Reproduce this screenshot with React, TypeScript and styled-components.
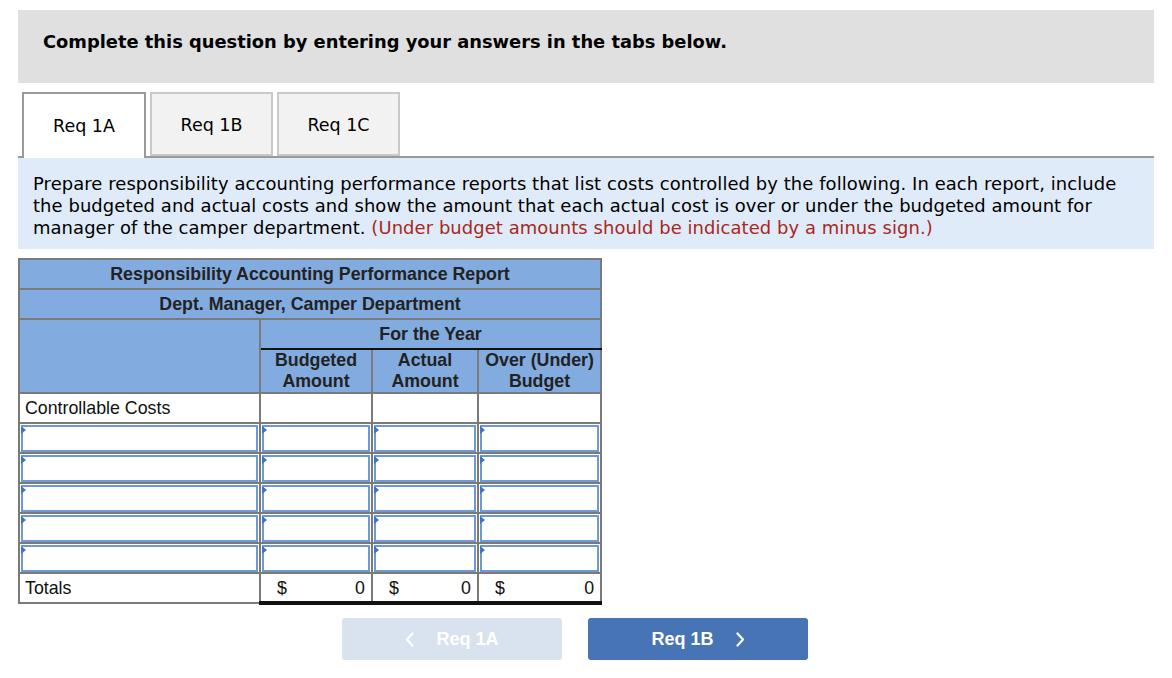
import React from "react";
import styled, { createGlobalStyle } from "styled-components";

const Global = createGlobalStyle`
  html, body { margin: 0; padding: 0; background: #fff; }
  body { font-family: "DejaVu Sans", Verdana, sans-serif; color: #000; }
`;

const Page = styled.div`
  padding: 10px 18px 0 18px;
  width: 1136px;
`;

const Banner = styled.div`
  background: #e0e0e0;
  height: 73px;
  padding: 21px 0 0 25px;
  box-sizing: border-box;
  font-weight: bold;
  font-size: 17.85px;
  line-height: 22px;
`;

const TabBar = styled.div`
  display: flex;
  gap: 4px;
  margin-top: 9px;
  padding-left: 4px;
  border-bottom: 2px solid #9a9a9a;
  height: 64px;
`;

const Tab = styled.div<{ $active?: boolean }>`
  width: ${(p) => (p.$active ? 124 : 123)}px;
  box-sizing: border-box;
  height: ${(p) => (p.$active ? 66 : 64)}px;
  border: 2px solid ${(p) => (p.$active ? "#9a9a9a" : "#c9c9c9")};
  border-bottom: ${(p) => (p.$active ? "none" : "2px solid #c9c9c9")};
  background: ${(p) => (p.$active ? "#fff" : "#f2f2f2")};
  display: flex;
  align-items: center;
  justify-content: center;
  font-size: 17.5px;
  padding-top: ${(p) => (p.$active ? 0 : 2)}px;
  position: relative;
  z-index: 1;
`;

const Instructions = styled.div`
  background: #dfebf8;
  padding: 15px 15px 10px 15px;
  font-size: 17.95px;
  line-height: 22px;
  letter-spacing: 0.075px;
  white-space: nowrap;
`;

const Red = styled.span`
  color: #a8281c;
`;

const Report = styled.table`
  margin-top: 9px;
  border-collapse: collapse;
  table-layout: fixed;
  width: 582px;
  font-family: "Liberation Sans", Arial, sans-serif;
  font-size: 17.8px;
  color: #222;
`;

const HeadCell = styled.td<{ $h?: number; $topBlack?: boolean }>`
  background: #82abdf;
  border: 2px solid #7a7a7a;
  ${(p) => (p.$topBlack ? "border-top: 2px solid #111;" : "")}
  font-weight: bold;
  text-align: center;
  height: ${(p) => p.$h ?? 28}px;
  padding: 0 2px;
  line-height: 21px;
  vertical-align: middle;
`;

const YearCell = styled(HeadCell)`
  border-bottom: 2px solid #111;
`;

const Cell = styled.td`
  border: 2px solid #7a7a7a;
  height: 27px;
  padding: 1px 0 0 5px;
  background: #fff;
  color: #111;
`;

const InputCell = styled.td`
  border: 2px solid #7a7a7a;
  height: 28px;
  padding: 0;
  background: #fff;
`;

const InputBox = styled.div`
  position: relative;
  margin: 1px 1px 0 1px;
  height: 27px;
  border: 2px solid #6e98d6;
  box-sizing: border-box;
  background: #fff;
  &::before {
    content: "";
    position: absolute;
    left: -2px;
    top: -1px;
    border-left: 5px solid #3f74c2;
    border-top: 4px solid transparent;
    border-bottom: 4px solid transparent;
  }
`;

const TotalCell = styled.td`
  border: 2px solid #7a7a7a;
  border-top: 2px solid #111;
  border-bottom: 4px solid #111;
  height: 26px;
  padding: 1px 6px 0 16px;
  background: #fff;
  color: #111;
`;

const TotalInner = styled.div`
  display: flex;
  justify-content: space-between;
  align-items: center;
`;

const Nav = styled.div`
  display: flex;
  gap: 26px;
  margin-top: 13px;
  padding-left: 324px;
`;

const NavButton = styled.div<{ $enabled?: boolean }>`
  width: 220px;
  height: 42px;
  border-radius: 3px;
  background: ${(p) => (p.$enabled ? "#4674b4" : "#d9e2ef")};
  color: #fff;
  display: flex;
  align-items: center;
  justify-content: center;
  gap: 22px;
  font-family: "Liberation Sans", Arial, sans-serif;
  font-weight: bold;
  font-size: 18px;
`;

const Chevron = ({ dir }: { dir: "left" | "right" }) => (
  <svg width="9" height="15" viewBox="0 0 9 15">
    <path
      d={dir === "left" ? "M7.5 1.5 L2 7.5 L7.5 13.5" : "M1.5 1.5 L7 7.5 L1.5 13.5"}
      fill="none"
      stroke="#fff"
      strokeWidth="2.2"
      strokeLinecap="round"
      strokeLinejoin="round"
    />
  </svg>
);

export default function App() {
  const inputRows = [0, 1, 2, 3, 4];
  return (
    <>
      <Global />
      <Page>
        <Banner>Complete this question by entering your answers in the tabs below.</Banner>
        <TabBar>
          <Tab $active>Req 1A</Tab>
          <Tab>Req 1B</Tab>
          <Tab>Req 1C</Tab>
        </TabBar>
        <Instructions>
          Prepare responsibility accounting performance reports that list costs controlled by the following. In each report, include
          <br />
          the budgeted and actual costs and show the amount that each actual cost is over or under the budgeted amount for
          <br />
          manager of the camper department. <Red>(Under budget amounts should be indicated by a minus sign.)</Red>
        </Instructions>
        <Report>
          <colgroup>
            <col style={{ width: 241 }} />
            <col style={{ width: 112 }} />
            <col style={{ width: 106 }} />
            <col style={{ width: 123 }} />
          </colgroup>
          <tbody>
            <tr>
              <HeadCell colSpan={4}>Responsibility Accounting Performance Report</HeadCell>
            </tr>
            <tr>
              <HeadCell colSpan={4}>Dept. Manager, Camper Department</HeadCell>
            </tr>
            <tr>
              <HeadCell rowSpan={2} />
              <YearCell colSpan={3}>For the Year</YearCell>
            </tr>
            <tr>
              <HeadCell $h={41} $topBlack>Budgeted<br />Amount</HeadCell>
              <HeadCell $h={41} $topBlack>Actual<br />Amount</HeadCell>
              <HeadCell $h={41} $topBlack>Over (Under)<br />Budget</HeadCell>
            </tr>
            <tr>
              <Cell>Controllable Costs</Cell>
              <Cell />
              <Cell />
              <Cell />
            </tr>
            {inputRows.map((r) => (
              <tr key={r}>
                <InputCell><InputBox /></InputCell>
                <InputCell><InputBox /></InputCell>
                <InputCell><InputBox /></InputCell>
                <InputCell><InputBox /></InputCell>
              </tr>
            ))}
            <tr>
              <Cell>Totals</Cell>
              <TotalCell><TotalInner><span>$</span><span>0</span></TotalInner></TotalCell>
              <TotalCell><TotalInner><span>$</span><span>0</span></TotalInner></TotalCell>
              <TotalCell><TotalInner><span>$</span><span>0</span></TotalInner></TotalCell>
            </tr>
          </tbody>
        </Report>
        <Nav>
          <NavButton><Chevron dir="left" />Req 1A</NavButton>
          <NavButton $enabled>Req 1B<Chevron dir="right" /></NavButton>
        </Nav>
      </Page>
    </>
  );
}
